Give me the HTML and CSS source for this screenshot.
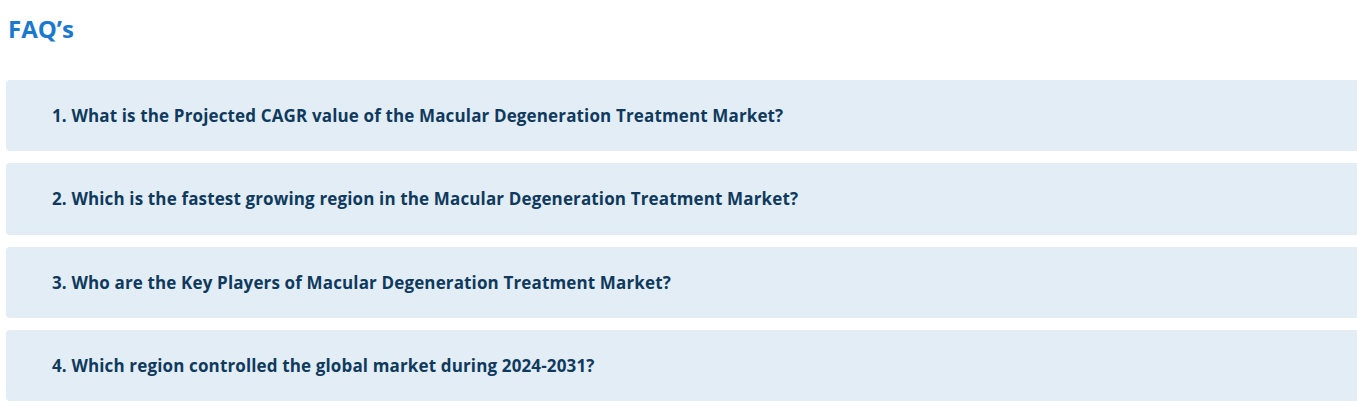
FILE: index.html
```html
<!DOCTYPE html>
<html>
<head>
  <meta charset="UTF-8">
  <title>FAQ's</title>
  <link rel="stylesheet" href="styles.css">
</head>
<body>
  <div class="faqSection">
    <h2 class="faqTitle">FAQ’s</h2>

    <div class="faqList">
      <div class="faqItem">1. What is the Projected CAGR value of the Macular Degeneration Treatment Market?</div>
      <div class="faqItem">2. Which is the fastest growing region in the Macular Degeneration Treatment Market?</div>
      <div class="faqItem">3. Who are the Key Players of Macular Degeneration Treatment Market?</div>
      <div class="faqItem">4. Which region controlled the global market during 2024-2031?</div>
    </div>
  </div>
</body>
</html>
```

FILE: styles.css
```css
body {
  font-family: "Open Sans", Lato, sans-serif;
  margin: 0;
  padding: 0;
  overflow: hidden;
  background: #fff;
}

.faqSection {
  padding: 0 0 0 6px;
}

.faqTitle {
  margin: 0;
  padding: 12px 0 0 2px;
  height: 80px;
  box-sizing: border-box;
  font-size: 24px;
  font-weight: 700;
  color: #1b78cf;
}

.faqList {
  display: flex;
  flex-direction: column;
  gap: 12px;
  margin-right: -20px;
}

.faqItem {
  background-color: #e3edf6;
  border-radius: 4px;
  height: 71.3px;
  display: flex;
  align-items: center;
  padding-left: 46px;
  font-size: 17px;
  font-weight: 700;
  letter-spacing: 0.14px;
  color: #0f3a5d;
}
```
